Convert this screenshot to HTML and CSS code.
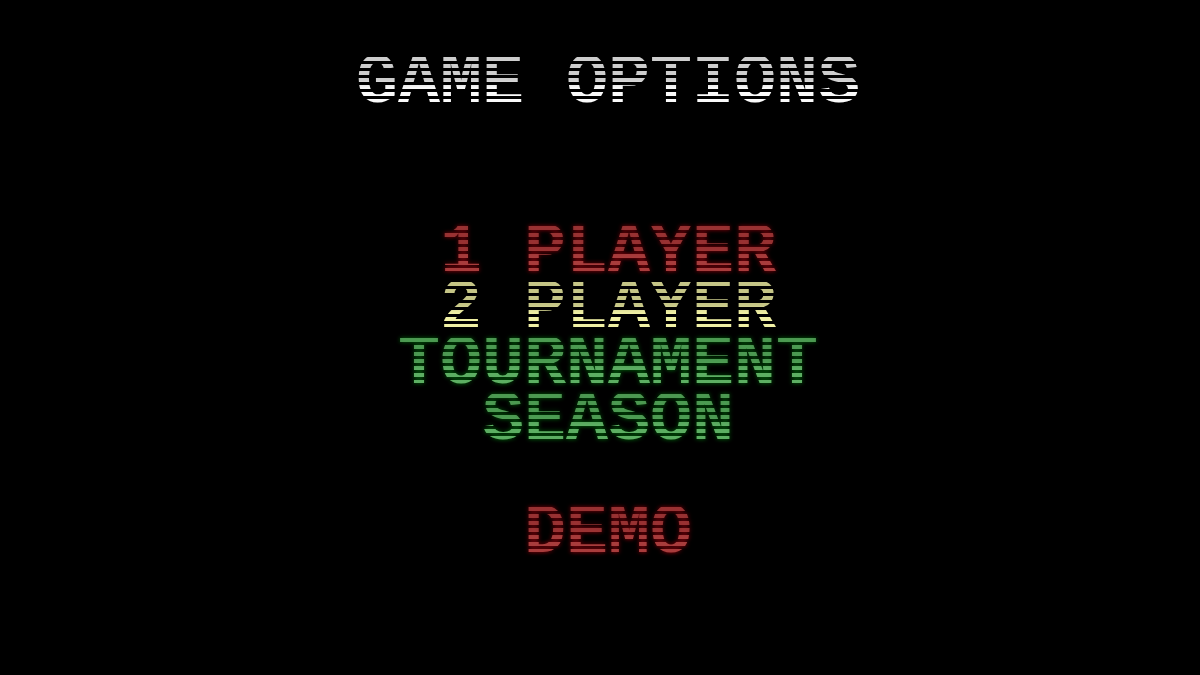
FILE: index.html
```html
<!DOCTYPE html>
<html lang="en">
<head>
<meta charset="utf-8">
<meta name="viewport" content="width=device-width, initial-scale=1">
<title>Game Options</title>
<link rel="stylesheet" href="styles.css">
</head>
<body>
<main class="screen">
  <h1 class="line title"><span class="scan">GAME OPTIONS</span></h1>
  <nav class="menu" aria-label="Game options">
    <button type="button" class="line option red"><span class="scan">1 PLAYER</span></button>
    <button type="button" class="line option yellow"><span class="scan">2 PLAYER</span></button>
    <button type="button" class="line option green"><span class="scan">TOURNAMENT</span></button>
    <button type="button" class="line option green"><span class="scan">SEASON</span></button>
    <button type="button" class="line option red demo"><span class="scan">DEMO</span></button>
  </nav>
</main>
</body>
</html>
```

FILE: styles.css
```css
body {
  margin: 0;
  background: #000;
}

.screen {
  box-sizing: border-box;
  min-height: 100vh;
  padding: 56px 0 56px 16px;
  display: flex;
  flex-direction: column;
  align-items: center;
  gap: 113px;
}

.menu {
  display: flex;
  flex-direction: column;
  align-items: center;
}

.line {
  margin: 0;
  padding: 0;
  border: 0;
  background: none;
  font: bold 70px/56px "Liberation Mono", "Courier New", monospace;
  white-space: pre;
}

.option {
  cursor: pointer;
}

/* Scanlines: 4px lit, 3px dark, brighter toward the baseline */
.scan {
  display: block;
  mask-image:
    repeating-linear-gradient(to bottom, transparent 0 1px, #000 1px 5px, transparent 5px 7px),
    linear-gradient(to bottom, rgb(0 0 0 / 82%) 0 24px, #000 32px);
  mask-composite: intersect;
}

.title {
  color: #fafafa;
}

.red {
  color: #a83c3c;
  filter: drop-shadow(0 0 2px #a8000c);
}

.yellow {
  color: #f0f0a4;
}

.green {
  color: #5cae62;
  filter: drop-shadow(0 0 2px #00780c);
}

.demo {
  margin-top: 57px;
}
```
